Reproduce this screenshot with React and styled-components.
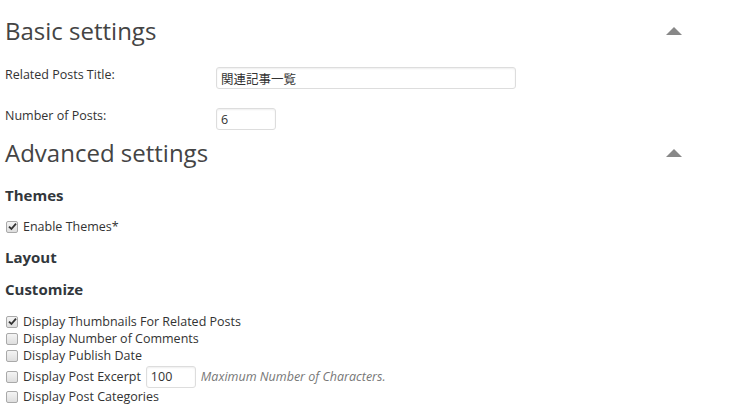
import React from 'react';
import styled, { createGlobalStyle } from 'styled-components';

const Global = createGlobalStyle`
    body {
        margin:0;
        background:#fff;
        font-family:"Open Sans","Noto Sans CJK JP",sans-serif;
        font-size:12.5px;
        color:#333;
    }
`;

const Page = styled.div`
    padding:0 5px;
`;

const SectionHead = styled.div`
    display:flex;
    justify-content:space-between;
    align-items:center;
    width:677px;
    margin-top:${props => props.top || 0}px;
`;

const Heading = styled.h2`
    margin:0;
    font-size:24px;
    font-weight:400;
    line-height:30px;
    color:#444;
`;

const Toggle = styled.span`
    width:0;
    height:0;
    border-left:8px solid transparent;
    border-right:8px solid transparent;
    border-bottom:8px solid #888;
`;

const FormRow = styled.div`
    display:flex;
    align-items:flex-start;
    margin-top:${props => props.top || 0}px;
`;

const Label = styled.div`
    width:211px;
    line-height:16px;
`;

const TextInput = styled.input`
    box-sizing:border-box;
    width:${props => props.w || 300}px;
    height:22px;
    margin-left:${props => props.gap || 0}px;
    padding:0 4px;
    border:1px solid #ddd;
    border-radius:3px;
    box-shadow:inset 0 1px 2px rgba(0,0,0,0.07);
    font-family:"Open Sans","Noto Sans CJK JP",sans-serif;
    font-size:12.5px;
    color:#333;
    background:#fff;
    outline:none;
`;

const SubHead = styled.h3`
    margin:${props => props.top || 0}px 0 0;
    font-size:15px;
    font-weight:700;
    line-height:18px;
    color:#32373c;
`;

const CheckRow = styled.label`
    display:flex;
    align-items:center;
    min-height:${props => props.h || 17}px;
    line-height:17px;
    margin-top:${props => props.top || 0}px;
`;

const Box = styled.span`
    box-sizing:border-box;
    display:inline-flex;
    align-items:center;
    justify-content:center;
    width:12px;
    height:12px;
    margin:0 5px 0 1px;
    border:1px solid #a9a9a9;
    border-radius:2px;
    background:linear-gradient(#f4f4f4,#dedede);
`;

const Note = styled.span`
    margin-left:5px;
    font-style:italic;
    color:#777;
`;

const Check = ({ checked, children, top, h }) => (
    <CheckRow top={top} h={h}>
        <Box>
            {checked && (
                <svg width="9" height="9" viewBox="0 0 9 9">
                    <path d="M1 4.6 L3.4 7 L8 1.6" fill="none" stroke="#333" strokeWidth="1.8" />
                </svg>
            )}
        </Box>
        {children}
    </CheckRow>
);

const App = () => {
    return (
        <Page>
            <Global />
            <SectionHead top={16}>
                <Heading>Basic settings</Heading>
                <Toggle />
            </SectionHead>
            <FormRow top={21}>
                <Label>Related Posts Title:</Label>
                <TextInput defaultValue="関連記事一覧" />
            </FormRow>
            <FormRow top={19}>
                <Label>Number of Posts:</Label>
                <TextInput w={60} defaultValue="6" />
            </FormRow>
            <SectionHead top={8}>
                <Heading>Advanced settings</Heading>
                <Toggle />
            </SectionHead>
            <SubHead top={18}>Themes</SubHead>
            <Check checked top={14}>Enable Themes*</Check>
            <SubHead top={13}>Layout</SubHead>
            <SubHead top={14}>Customize</SubHead>
            <Check checked top={15}>Display Thumbnails For Related Posts</Check>
            <Check>Display Number of Comments</Check>
            <Check>Display Publish Date</Check>
            <Check top={1} h={23}>
                Display Post Excerpt
                <TextInput w={50} gap={5} defaultValue="100" />
                <Note>Maximum Number of Characters.</Note>
            </Check>
            <Check>Display Post Categories</Check>
        </Page>
    );
};

export default App;
